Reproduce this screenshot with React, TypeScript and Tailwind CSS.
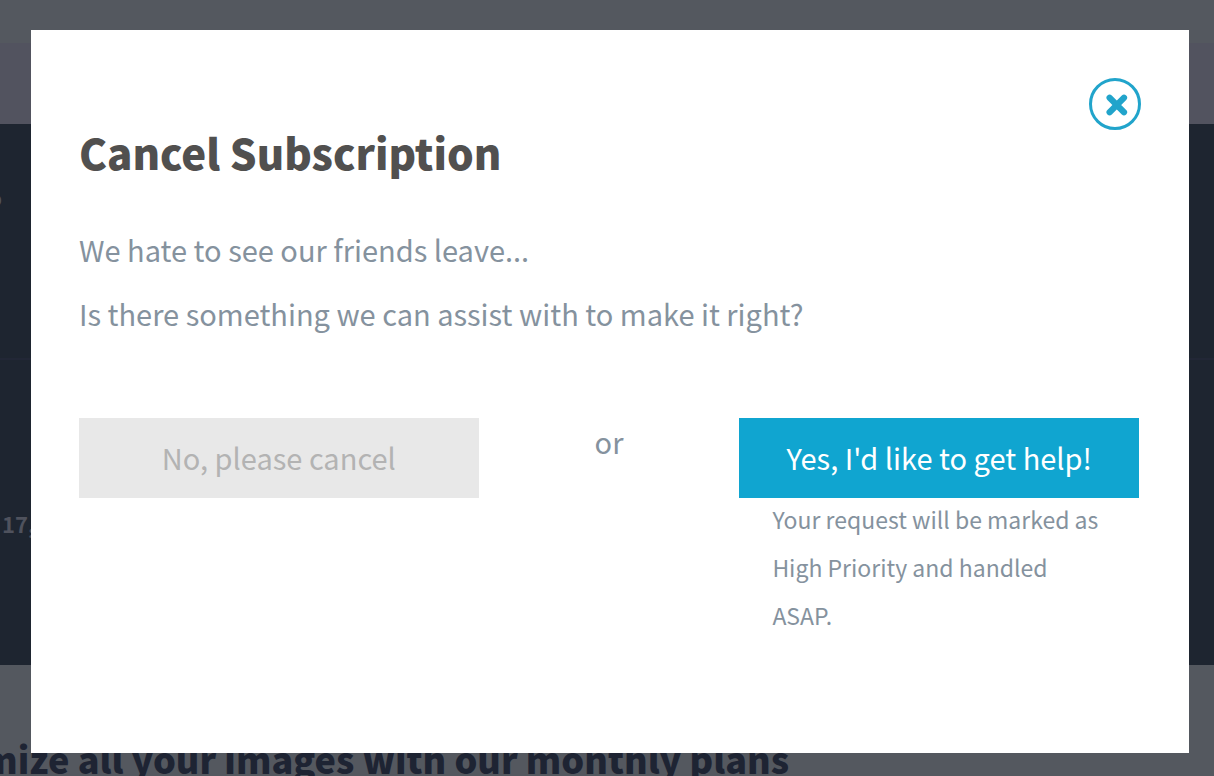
import React from "react";

type ActionButtonProps = {
    label: string;
    primary?: boolean;
};

const ActionButton: React.FC<ActionButtonProps> = ({ label, primary = false }) => {
    return (
        <button
            type="button"
            className={`w-full h-20 pb-[3px] leading-10 cursor-pointer ${
                primary ? "bg-[#10a5d0] text-white" : "bg-[#e8e8e8] text-[#b3b3b3]"
            }`}
        >
            {label}
        </button>
    );
};

// Dimmed account page that stays visible around the dialog
const PageBehind = () => {
    return (
        <div className="flex flex-col min-h-screen bg-[#54585f]" aria-hidden="true">
            <div className="h-[43px]" />
            <div className="h-[81px] bg-[#52535f]" />
            <div className="bg-[#1e2530] text-[#4f525d] font-bold text-[22px] leading-8">
                <div className="flex justify-end w-[2px] pt-[57px] pb-[145px] overflow-hidden">o</div>
                <div className="border-t-2 border-[#222736] pt-[147px] pb-[126px] pl-0.5">17, 2016</div>
            </div>
            <div className="flex justify-end w-[65%] h-[111px] pt-[66px] overflow-hidden whitespace-nowrap text-[36px] leading-[54px] font-black text-[#1e2433]">
                <p>Optimize all your images with our monthly plans</p>
            </div>
        </div>
    );
};

const CancelDialog = () => {
    return (
        <div
            role="dialog"
            aria-labelledby="cancel-title"
            className="w-full self-start bg-white pt-12 pr-12 pb-[114px] pl-12 text-[29px] leading-10 text-[#85929e]"
        >
            <div className="flex justify-end">
                <button
                    type="button"
                    aria-label="Close"
                    className="flex items-center justify-center size-[52px] rounded-full border-3 border-[#21a4cb] text-[#21a4cb] cursor-pointer"
                >
                    <svg className="size-[26px]" viewBox="0 0 26 26" fill="none" stroke="currentColor" strokeWidth="6.2" strokeLinecap="round">
                        <path d="M7.6 6.8l14.4 14.4M22 6.8L7.6 21.2" />
                    </svg>
                </button>
            </div>

            <h1 id="cancel-title" className="text-[42px] leading-11 font-black text-[#51504f]">
                Cancel Subscription
            </h1>
            <p className="mt-[55px]">We hate to see our friends leave...</p>
            <p className="mt-6">Is there something we can assist with to make it right?</p>

            <div className="grid grid-cols-[400fr_261fr_400fr] mt-[85px] pr-0.5">
                <ActionButton label="No, please cancel" />
                <p className="pt-[3px] text-center">or</p>
                <div>
                    <ActionButton label="Yes, I'd like to get help!" primary />
                    <p className="-mt-[3px] pl-[33px] pr-8 text-[23px] leading-12">
                        Your request will be marked as High Priority and handled ASAP.
                    </p>
                </div>
            </div>
        </div>
    );
};

export default function App() {
    return (
        <main className="relative min-h-screen overflow-hidden font-['Noto_Sans_CJK_SC','Noto_Sans',sans-serif]">
            <PageBehind />
            <div className="absolute inset-0 flex pt-[30px] pr-[25px] pl-[31px]">
                <CancelDialog />
            </div>
        </main>
    );
}
